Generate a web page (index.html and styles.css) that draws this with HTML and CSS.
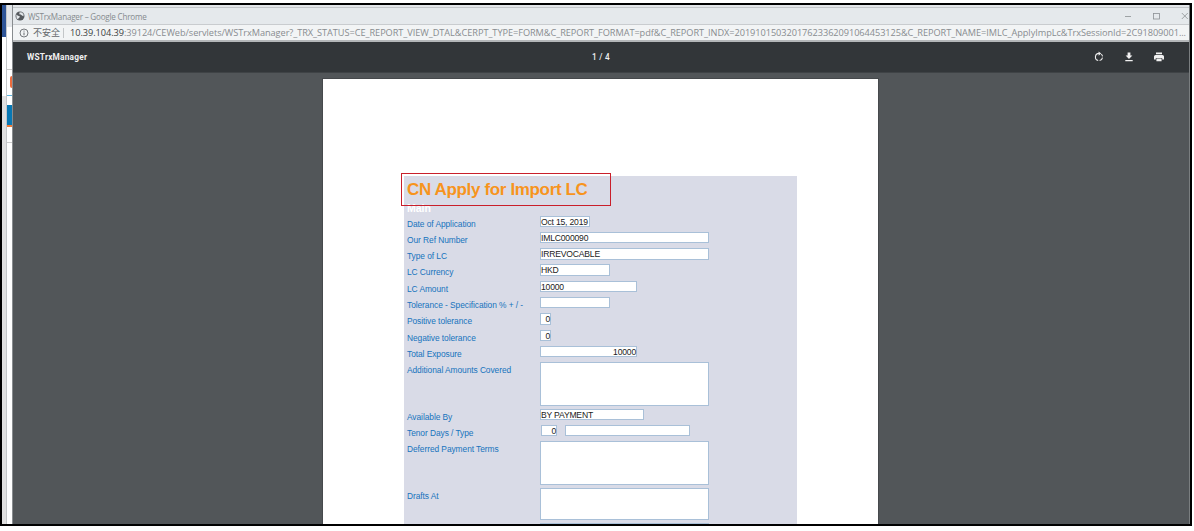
FILE: index.html
```html
<!DOCTYPE html>
<html lang="en">
<head>
<meta charset="utf-8">
<title>WSTrxManager</title>
<link rel="stylesheet" href="styles.css">
</head>
<body>
<div class="frame">
  <div class="edge"><i class="edge-blue"></i><i class="edge-gray"></i></div>
  <div class="backpage">
    <i class="bp-head"></i><i class="bp-space"></i><i class="bp-tab"></i><i class="bp-line"></i><i class="bp-gap"></i><i class="bp-menu"></i><i class="bp-rest"></i>
  </div>
  <div class="window">
    <div class="titlebar">
      <svg class="globe" viewBox="0 0 10 10"><circle cx="5" cy="5" r="4.5" fill="#55595d"/><path d="M1.3 3.5 3 4.8 4.8 5.2 4.5 6.6 3.4 7.2 3.2 8.6 1.6 7.2Z M4.6 1.2 7 1.6 8.6 3.4 8.4 5.2 7 4.6 5.8 3.5 4.3 3.3Z" fill="#e4e8eb"/></svg>
      <span class="wtitle">WSTrxManager – Google Chrome</span>
      <svg class="controls" viewBox="0 0 66 12" fill="none" stroke="#8c9093" stroke-width=".8"><path d="M1 6.5h6M57.8 3l6 6m0-6l-6 6"/><rect x="29.5" y="3.5" width="6" height="5.5"/></svg>
    </div>
    <div class="address">
      <svg class="info" viewBox="0 0 10 10"><circle cx="5" cy="5" r="4" fill="none" stroke="#666a6e" stroke-width=".9"/><path d="M5 4.5v2.8M5 2.6v1" stroke="#666a6e"/></svg>
      <span class="unsafe">不安全</span><i class="sep"></i>
      <span class="url"><b>10.39.104.39</b>:39124/CEWeb/servlets/WSTrxManager?_TRX_STATUS=CE_REPORT_VIEW_DTAL&amp;CERPT_TYPE=FORM&amp;C_REPORT_FORMAT=pdf&amp;C_REPORT_INDX=20191015032017623362091064453125&amp;C_REPORT_NAME=IMLC_ApplyImpLc&amp;TrxSessionId=2C91809001...</span>
    </div>
    <div class="toolbar">
      <span class="doc">WSTrxManager</span>
      <span class="pages">1 / 4</span>
      <div class="tools">
        <svg viewBox="0 0 12 12"><path d="M6 2.4A3.6 3.6 0 0 0 5.2 9.5M6.6 9.5A3.6 3.6 0 0 0 9.5 6.6M9.5 5.4A3.6 3.6 0 0 0 8.3 3.2" fill="none" stroke="#eee" stroke-width="1.1"/><path d="M5.6.4 8.2 2.5 5.6 4.7Z" fill="#eee"/></svg>
        <svg viewBox="0 0 12 12"><path d="M4.6 1.5h2.8v3h2L6 8 2.6 4.5h2ZM2.3 9h7.4v1.3H2.3Z" fill="#f1f1f1"/></svg>
        <svg viewBox="0 0 12 12"><path d="M3 1.6h6v1.7H3ZM2.6 3.9h6.8a1.6 1.6 0 0 1 1.6 1.6v3H9.2V7H2.8v1.5H1v-3a1.6 1.6 0 0 1 1.6-1.6ZM3.4 7.6h5.2v2.7H3.4Z" fill="#f1f1f1"/></svg>
      </div>
    </div>
    <div class="viewer">
      <div class="page">
        <div class="form">
          <h1 class="heading">CN Apply for Import LC</h1>
          <h2 class="section">Main</h2>
          <div class="row"><span>Date of Application</span><p class="f date">Oct 15, 2019</p></div>
          <div class="row"><span>Our Ref Number</span><p class="f full">IMLC000090</p></div>
          <div class="row"><span>Type of LC</span><p class="f full">IRREVOCABLE</p></div>
          <div class="row"><span>LC Currency</span><p class="f short">HKD</p></div>
          <div class="row"><span>LC Amount</span><p class="f mid">10000</p></div>
          <div class="row"><span>Tolerance - Specification % + / -</span><p class="f short"></p></div>
          <div class="row"><span>Positive tolerance</span><p class="f tiny num">0</p></div>
          <div class="row"><span>Negative tolerance</span><p class="f tiny num">0</p></div>
          <div class="row"><span>Total Exposure</span><p class="f mid num">10000</p></div>
          <div class="row tall"><span>Additional Amounts Covered</span><p class="f full area"></p></div>
          <div class="row"><span>Available By</span><p class="f pay">BY PAYMENT</p></div>
          <div class="row"><span>Tenor Days / Type</span><p class="f days num">0</p><p class="f type"></p></div>
          <div class="row tall"><span>Deferred Payment Terms</span><p class="f full area"></p></div>
          <div class="row drafts"><span>Drafts At</span><p class="f full area"></p></div>
          <div class="row"><span></span><p class="f full"></p></div>
          <i class="marker"></i>
        </div>
      </div>
    </div>
  </div>
</div>
</body>
</html>
```
FILE: styles.css
```css
* { box-sizing: border-box; }
body { margin: 0; padding-top: 3px; height: 531px; overflow: hidden; background: #fff; font-family: "Liberation Sans", Arial, sans-serif; }
svg { display: block; flex: none; }
i { display: block; }
p, h1, h2 { margin: 0; }
.frame { display: flex; width: 1192px; height: 523px; border: 2px solid #000; overflow: hidden; }
.edge { width: 4px; display: flex; flex-direction: column; }
.edge-blue { height: 32px; background: #2f5597; }
.edge-gray { flex: 1; background: linear-gradient(#fff 0 59px, #e0e0e0 59px); }
.backpage { width: 6px; border-left: 1px solid #c4c7c9; display: flex; flex-direction: column; background: #fff; }
.bp-head { height: 22px; background: #e3e6e9; }
.bp-space { height: 43px; border-bottom: 1px solid #ccc; }
.bp-tab { height: 12px; margin: 6px 0 7px 3px; background: #ed6b3d; border-radius: 3px 0 0 3px; }
.bp-line { height: 1px; background: #5fb5de; }
.bp-gap { height: 9px; }
.bp-menu { height: 22px; background: #0878b4; border-bottom: 2px solid #ef7935; }
.bp-rest { height: 16px; border-bottom: 1px solid #ccc; }
.window { flex: 1; display: flex; flex-direction: column; border-left: 1px solid #888c8f; border-right: 1px solid #7a7e80; min-width: 0; padding-top: 2px; background: #e3e6e9; }
.titlebar { height: 17px; flex: none; border-top: 1px solid #c3c6c9; background: #e5e9ec; display: flex; align-items: center; padding-left: 2px; }
.globe { width: 10px; height: 10px; }
.wtitle { margin-left: 3px; font: 8.1px/15px "Open Sans", "Noto Sans", sans-serif; letter-spacing: -.22px; color: #868b8f; white-space: nowrap; }
.controls { width: 66px; height: 12px; margin-left: auto; margin-right: -1px; }
.address { height: 18px; flex: none; border-top: 1px solid #c9cccf; border-bottom: 2px solid #b4b7b9; background: #f2f4f5; display: flex; align-items: center; padding-left: 6px; }
.info { width: 10px; height: 10px; }
.unsafe { margin-left: 4px; width: 29px; font: 9px/14px "Noto Sans CJK SC", sans-serif; color: #666a6e; white-space: nowrap; }
.sep { width: 1px; height: 10px; background: #c3c6c8; margin-left: 1px; }
.url { margin-left: 6px; font: 9.2px/15px "Open Sans", "Noto Sans", sans-serif; letter-spacing: -.05px; color: #888c90; white-space: nowrap; }
.url b { color: #3b3f43; font-weight: 400; }
.toolbar { height: 31px; flex: none; background: #323639; display: grid; grid-template-columns: 565px 30px 1fr; align-items: center; color: #f1f1f1; padding: 0 24px 0 14px; border-bottom: 1px solid #3f4346; }
.doc { font: bold 8.3px/12px Roboto, sans-serif; letter-spacing: .22px; }
.pages { font: 500 8.2px/12px Roboto, sans-serif; white-space: nowrap; letter-spacing: .3px; }
.tools { display: flex; gap: 18px; justify-content: flex-end; }
.tools svg { width: 12px; height: 12px; }
.viewer { flex: 1; min-height: 0; background: #525659; padding: 5px 0 0 309px; }
.page { width: 557px; height: 460px; background: #fff; border: 1px solid #46494c; padding: 97px 0 0 81px; }
.form { position: relative; width: 393px; height: 349px; background: #d9dbe7; padding-left: 3px; }
.heading { height: 26px; font: bold 17px/27px "Liberation Sans", Arial, sans-serif; letter-spacing: -.35px; color: #f7941d; white-space: nowrap; }
.section { height: 13.6px; font: bold 10.5px/12px "Liberation Sans", Arial, sans-serif; color: #fff; }
.row { height: 16.3px; display: flex; align-items: flex-start; font-size: 8.4px; letter-spacing: -.06px; line-height: 16.6px; color: #1673bd; white-space: nowrap; }
.row span { width: 133px; }
.row.tall { height: 46.4px; }
.row.drafts { height: 35.2px; }
.f { height: 11.4px; border: 1px solid #a9c0d8; background: #fff; color: #222; font-size: 8.6px; letter-spacing: -.2px; line-height: 10px; }
.full { width: 169px; }
.date { width: 50px; }
.short { width: 70px; }
.mid { width: 97px; }
.tiny { width: 11px; }
.pay { width: 104px; }
.days { width: 16px; margin-left: 1px; }
.type { width: 125px; margin-left: 8px; }
.num { text-align: right; }
.area { height: 43.5px; }
.drafts .area { height: 32.8px; }
.marker { position: absolute; left: -3px; top: -3px; width: 210px; height: 33px; border: 1px solid #c91f2b; }
```
